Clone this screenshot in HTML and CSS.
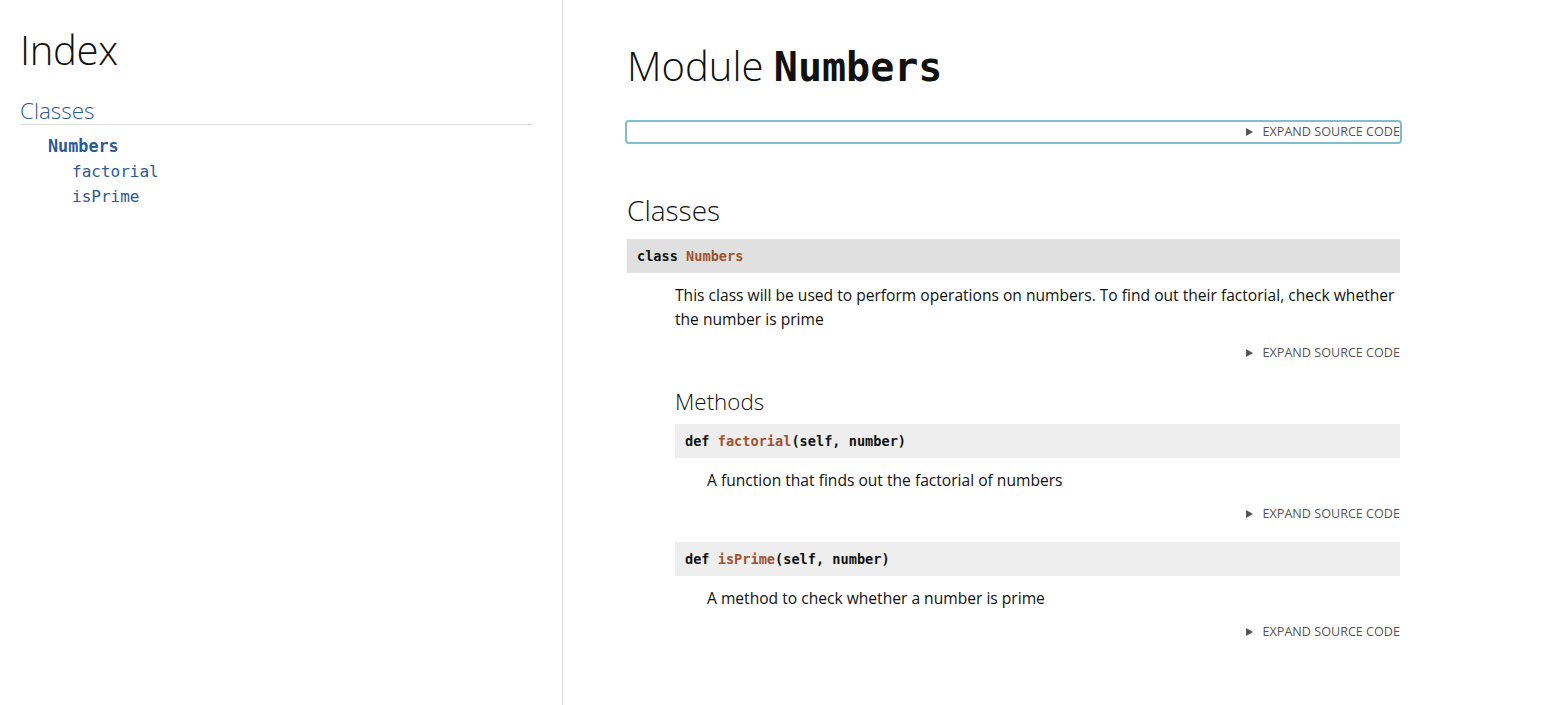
FILE: index.html
```html
<!DOCTYPE html>
<html lang="en">
<head>
<meta charset="utf-8">
<title>Numbers API documentation</title>
<link rel="stylesheet" href="styles.css">
</head>
<body>
<main class="layout">
  <nav class="sidebar">
    <h1 class="index-title">Index</h1>
    <h3 class="index-section"><a href="#header-classes">Classes</a></h3>
    <ul class="index-classes">
      <li>
        <h4 class="index-class"><a href="#Numbers.Numbers"><code>Numbers</code></a></h4>
        <ul class="index-methods">
          <li><a href="#Numbers.Numbers.factorial"><code>factorial</code></a></li>
          <li><a href="#Numbers.Numbers.isPrime"><code>isPrime</code></a></li>
        </ul>
      </li>
    </ul>
  </nav>
  <article class="content">
    <h1 class="title">Module <code class="title-code">Numbers</code></h1>
    <div class="source source-module"><span class="summary"><span class="tri"></span>Expand source code</span></div>
    <h2 class="section-title" id="header-classes">Classes</h2>
    <dl class="classes">
      <dt class="name name-class"><code><span class="kw">class</span> <span class="ident">Numbers</span></code></dt>
      <dd class="class-body">
        <p class="desc">This class will be used to perform operations on numbers. To find out their factorial, check whether the number is prime</p>
        <div class="source"><span class="summary"><span class="tri"></span>Expand source code</span></div>
        <h3 class="methods-title">Methods</h3>
        <dl class="methods">
          <dt class="name name-method"><code><span class="kw">def</span> <span class="ident">factorial</span>(self, number)</code></dt>
          <dd class="method-body">
            <p class="desc">A function that finds out the factorial of numbers</p>
            <div class="source"><span class="summary"><span class="tri"></span>Expand source code</span></div>
          </dd>
          <dt class="name name-method"><code><span class="kw">def</span> <span class="ident">isPrime</span>(self, number)</code></dt>
          <dd class="method-body">
            <p class="desc">A method to check whether a number is prime</p>
            <div class="source"><span class="summary"><span class="tri"></span>Expand source code</span></div>
          </dd>
        </dl>
      </dd>
    </dl>
  </article>
</main>
</body>
</html>
```

FILE: styles.css
```css
* { box-sizing: border-box; }
html, body { margin: 0; padding: 0; }
body {
  font-family: "Open Sans", "Noto Sans", sans-serif;
  font-size: 16px;
  line-height: 1.5;
  color: #111;
  background: #fff;
}
a { color: #2b5b94; text-decoration: none; }
code { font-family: "DejaVu Sans Mono", monospace; }

.layout { display: flex; min-height: 100vh; }

.sidebar {
  flex: none;
  width: 563px;
  padding: 28px 29px 0 20px;
  border-right: 1px solid #ddd;
}
.index-title {
  margin: 0;
  font-size: 40px;
  line-height: 44px;
  font-weight: 300;
  letter-spacing: -0.3px;
}
.index-section {
  margin: 26px 0 0;
  font-size: 22.4px;
  line-height: 26px;
  font-weight: 300;
  border-bottom: 1px solid #ddd;
}
.index-classes { list-style: none; margin: 0; padding: 0 0 0 28px; line-height: 25px; }
.index-class { margin: 8px 0 0; font-size: 16.8px; font-weight: bold; line-height: 25px; }
.index-methods { list-style: none; margin: 0; padding: 0 0 0 24px; }

.content {
  flex: none;
  width: 837px;
  padding: 44px 0 0 64px;
}
.title {
  margin: 0;
  font-size: 40px;
  line-height: 44px;
  font-weight: 300;
}
.title-code { font-weight: bold; }

.source {
  text-align: right;
  font-size: 12.6px;
  line-height: 24px;
  color: #555;
  text-transform: uppercase;
}
.source-module {
  margin-top: 33px;
  line-height: 20px;
  outline: 2px solid #7fbdd0;
  border-radius: 2px;
}
.tri {
  display: inline-block;
  width: 0;
  height: 0;
  border-left: 7px solid #555;
  border-top: 4px solid transparent;
  border-bottom: 4px solid transparent;
  margin-right: 10px;
  vertical-align: 0;
}

.section-title {
  margin: 47px 0 8px;
  font-size: 28px;
  line-height: 42px;
  font-weight: 300;
}

dl { margin: 0; }
dd { margin: 0; }
.name {
  display: block;
  padding: 5px 10px;
  font-size: 13.6px;
  font-weight: bold;
  line-height: 24px;
  background: #eee;
}
.name-class { background: #dfe0df; }
.ident { color: #a0522d; }
.class-body { margin-left: 48px; }
.method-body { margin: 0 0 16px 32px; }
.desc { margin: 10px 0; font-size: 15.6px; line-height: 24px; }

.methods-title {
  margin: 25px 0 10px;
  font-size: 22.4px;
  line-height: 24px;
  font-weight: 300;
}
```
